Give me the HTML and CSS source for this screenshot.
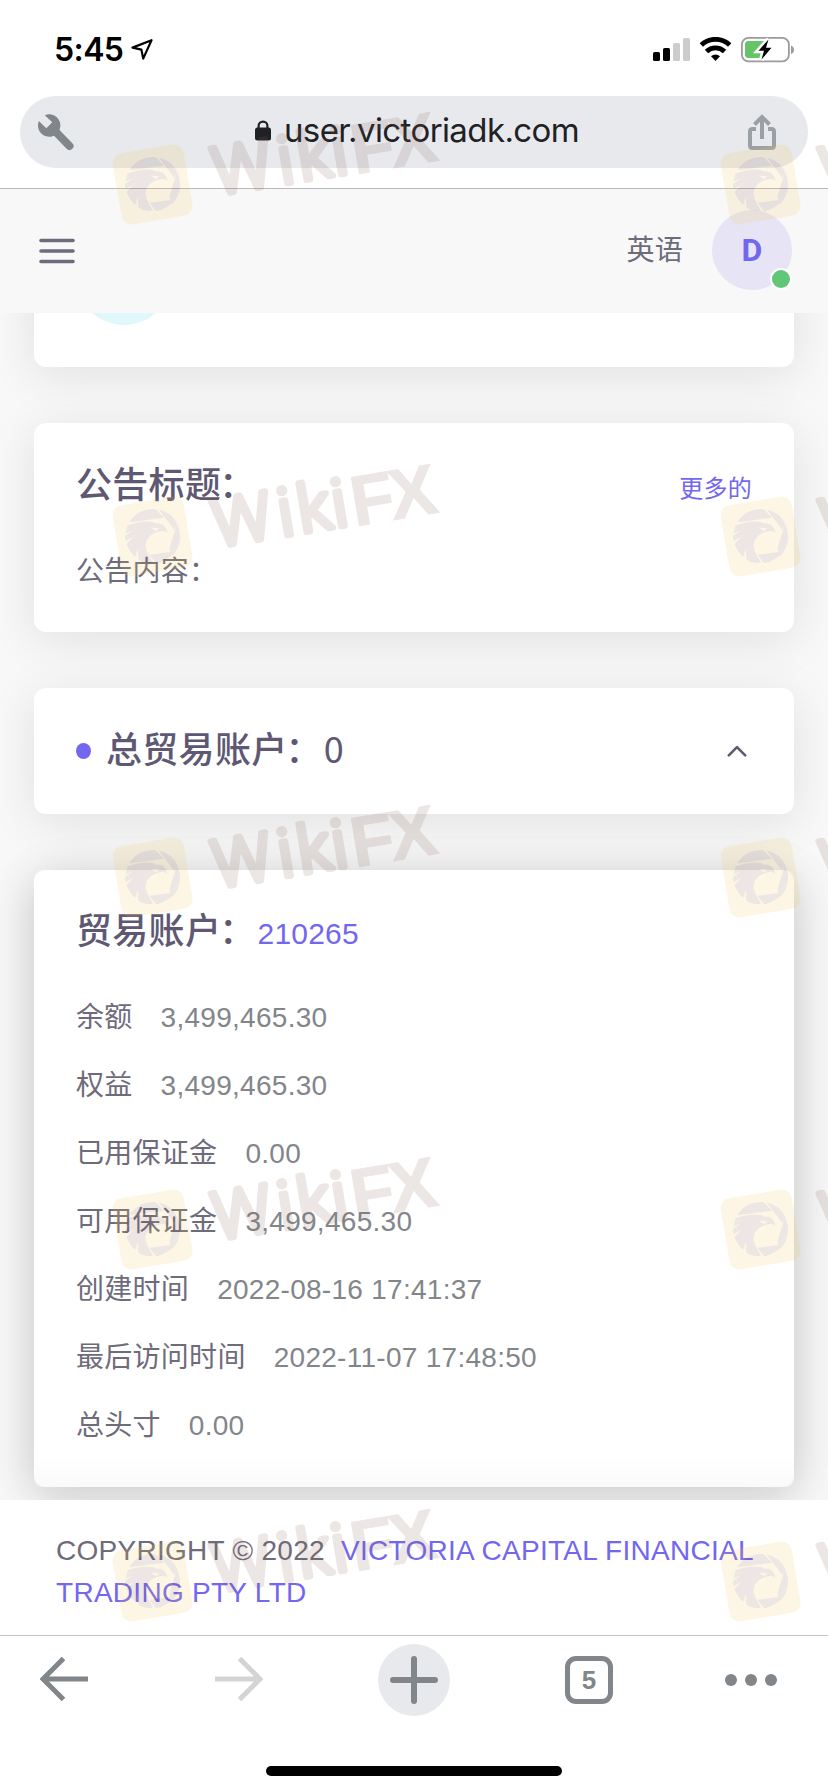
FILE: index.html
```html
<!DOCTYPE html>
<html lang="zh-CN">
<head>
<meta charset="utf-8">
<title>user.victoriadk.com</title>
<link rel="stylesheet" href="styles.css">
</head>
<body>
<div class="phone">
  <header class="status">
    <div class="status-left">
      <span class="clock">5:45</span>
      <svg class="loc" viewBox="0 0 22 21" width="22" height="21"><path d="M1.5 8.6 20.5 1.2 12.2 19.6 10.4 10.6z" fill="none" stroke="#000" stroke-width="2.2" stroke-linejoin="round"/></svg>
    </div>
    <svg class="status-right" viewBox="0 0 142 27" width="142" height="27">
      <g><rect x="0" y="15" width="7" height="9" rx="1.6"/><rect x="10" y="11" width="7" height="13" rx="1.6"/><rect x="20" y="6" width="7" height="18" rx="1.6" fill="#ccc"/><rect x="30" y="1" width="7" height="23" rx="1.6" fill="#ccc"/></g>
      <g fill="none" stroke="#000" stroke-width="4.8"><path d="M48.300 8A20.500 20.500 0 0 1 76.700 8"/><path d="M53.500 14.400A13 13 0 0 1 71.500 14.400"/></g>
      <path d="M58 19.200A6.600 6.600 0 0 1 67 19.200L62.500 24z"/>
      <rect x="88.900" y="0.900" width="47" height="23.400" rx="6.500" fill="none" stroke="#9b9b9b" stroke-width="1.800"/>
      <rect x="92" y="4" width="21" height="17" rx="3.500" fill="#65c466"/>
      <path d="M138 8.400a4.600 4.600 0 0 1 0 8.600z" fill="#9b9b9b"/>
      <path d="M115.500 2.500 105.500 13.800H111L108.500 22.500 118.500 10.800H113z" stroke="#fff" stroke-width="5"/>
      <path d="M115.500 2.500 105.500 13.800H111L108.500 22.500 118.500 10.800H113z"/>
    </svg>
  </header>
  <div class="urlbar-wrap">
    <div class="urlbar">
      <svg viewBox="0 0 36 37" width="36" height="37"><path d="M15 15 31.500 32" stroke="#80868a" stroke-width="8" stroke-linecap="round"/><path d="M6.800 1.200A11.200 11.200 0 1 1 .9 7L8.300 14.200 14.200 8.300z" fill="#80868a"/></svg>
      <div class="address">
        <svg viewBox="0 0 18 21" width="18" height="21"><path d="M4.600 9V6a4.400 4.400 0 0 1 8.800 0v3" fill="none" stroke="#202124" stroke-width="2.200"/><rect x="1" y="7.500" width="16" height="13" rx="2.500" fill="#202124"/></svg>
        <span class="host">user.victoriadk.com</span>
      </div>
      <svg viewBox="0 0 28 37" width="28" height="37" fill="none" stroke="#9aa0a6" stroke-width="4"><path d="M8 15H4.500Q2 15 2 17.500V31.500Q2 34 4.500 34H23.500Q26 34 26 31.500V17.500Q26 15 23.500 15H20M14 25V4M6.500 10.500 14 3 21.500 10.500"/></svg>
    </div>
  </div>
  <nav class="topnav">
    <svg viewBox="0 0 36 26" width="36" height="26" stroke="#6e6b7b" stroke-width="3.600" stroke-linecap="round"><path d="M2 2.500H34M2 13H34M2 23.500H34"/></svg>
    <div class="user"><span class="lang">英语</span><div class="avatar">D<i class="online"></i></div></div>
  </nav>
  <main class="page">
    <section class="card stats"><div class="stat-icon"></div></section>
    <section class="card notice">
      <div class="notice-head"><h2>公告标题<span class="colon">：</span></h2><a class="more">更多的</a></div>
      <p>公告内容：</p>
    </section>
    <section class="card total">
      <i class="dot"></i><h2>总贸易账户<span class="colon">：</span><span class="count">0</span></h2>
      <svg viewBox="0 0 20 12" width="20" height="12" fill="none" stroke="#5e5873" stroke-width="2.600" stroke-linecap="round" stroke-linejoin="round"><path d="M1.800 10.300 10 2.100 18.200 10.300"/></svg>
    </section>
    <div class="account-wrap">
      <section class="card account">
        <h2>贸易账户<span class="colon">：</span><a class="acct-no">210265</a></h2>
        <dl>
          <div><dt>余额</dt><dd>3,499,465.30</dd></div>
          <div><dt>权益</dt><dd>3,499,465.30</dd></div>
          <div><dt>已用保证金</dt><dd>0.00</dd></div>
          <div><dt>可用保证金</dt><dd>3,499,465.30</dd></div>
          <div><dt>创建时间</dt><dd>2022-08-16 17:41:37</dd></div>
          <div><dt>最后访问时间</dt><dd>2022-11-07 17:48:50</dd></div>
          <div><dt>总头寸</dt><dd>0.00</dd></div>
        </dl>
      </section>
    </div>
  </main>
  <footer class="copyright">COPYRIGHT © 2022&nbsp; <a>VICTORIA CAPITAL FINANCIAL TRADING PTY LTD</a></footer>
  <div class="toolbar">
    <svg viewBox="0 0 48 44" width="48" height="44" fill="none" stroke="#80868a" stroke-width="5"><path d="M48 22H4M23.500 1.500 3 22 23.500 42.500"/></svg>
    <svg class="forward" viewBox="0 0 48 44" width="48" height="44" fill="none" stroke="#d4d4d4" stroke-width="5"><path d="M0 22H44M24.500 1.500 45 22 24.500 42.500"/></svg>
    <div class="newtab"><svg viewBox="0 0 48 48" width="48" height="48" stroke="#80868a" stroke-width="6" stroke-linecap="round"><path d="M24 3V45M3 24H45"/></svg></div>
    <div class="tabs">5</div>
    <div class="menu"><i></i><i></i><i></i></div>
  </div>
  <div class="home"></div>

  <svg class="watermarks" viewBox="0 0 828 1792" width="828" height="1792">
    <defs>
      <g id="mark">
        <g transform="translate(152.600 184.500) rotate(-9.500)">
          <rect x="-36" y="-36" width="72" height="72" rx="10" fill="#f2c756"/>
          <g fill="#886356">
            <path d="M-20.500 -18A27.300 27.300 0 0 1 7.500 -26.500L14.500 -16.500Z"/>
            <path d="M10.500 -25.500A27.300 27.300 0 0 1 26.500 -8L22.500 -3Z"/>
            <path d="M27 -4A27.300 27.300 0 0 1 13.500 24L11 24.500 12.500 16Z" transform="rotate(-9)"/>
            <path d="M-6 17.500 19 18.500A27.300 27.300 0 0 1 -1 27Z"/>
            <path d="M-22.500 -15.500C-12 -17 1 -17 6 -12C12 -12 15.500 -7 15 -1.500C11 -5 7 -4 2 -3C-5 -1 -10 5 -8 13C-7 18 -5 22 -4 26C-11 25.500 -15 23 -18 20L-16 9L-20.500 17C-24 13 -26 8 -27 3L-19 -3L-27.500 0Q-27.500 -3 -27 -5L-19 -9L-26 -8Z"/>
          </g>
          <path d="M0 -9 8 -7 4 -5Z" fill="#f2c756"/>
        </g>
        <text class="mark-text" transform="translate(223 196.500) rotate(-9.500)"><tspan class="round" x="-6.500 60 80 114.500" y="-2.500">Wiki</tspan><tspan x="133.500 172.500" y="0">FX</tspan></text>
      </g>
    </defs>
    <g opacity=".16"><use href="#mark"/><use href="#mark" x="608"/></g>
    <g opacity=".16"><use href="#mark" y="352"/><use href="#mark" x="608" y="352"/></g>
    <g opacity=".16"><use href="#mark" y="693"/><use href="#mark" x="608" y="693"/></g>
    <g opacity=".16"><use href="#mark" y="1045"/><use href="#mark" x="608" y="1045"/></g>
    <g opacity=".16"><use href="#mark" y="1397"/><use href="#mark" x="608" y="1397"/></g>
  </svg>
</div>
</body>
</html>
```
FILE: styles.css
```css
* { box-sizing: border-box; margin: 0; padding: 0; }
body {
  width: 828px; height: 1792px; overflow: hidden; background: #fff;
  font: 28px/42px "Liberation Sans", "Noto Sans CJK SC", sans-serif;
  letter-spacing: .28px; color: #6e6b7b;
}
svg { display: block; flex: none; }
i { display: block; }
.phone { position: relative; width: 828px; height: 1792px; display: flex; flex-direction: column; overflow: hidden; }
.phone > * { flex: none; }

.status { height: 96px; padding: 0 33px 0 54px; display: flex; justify-content: space-between; }
.status-left { display: flex; }
.clock { font: 600 32px/40px Inter, sans-serif; letter-spacing: -.6px; color: #000; padding-top: 30px; width: 77px; }
.loc { margin-top: 39px; }
.status-right { margin-top: 37px; }
.urlbar-wrap { height: 93px; padding: 0 20px; border-bottom: 1px solid #b9babc; }
.urlbar { height: 72px; border-radius: 36px; background: #e8e9ed; display: flex; align-items: center; justify-content: space-between; padding: 0 32px 0 18px; }
.address { display: flex; align-items: center; gap: 12px; padding: 0 0 4px 11px; }
.host { font: 400 33px/40px Inter, sans-serif; letter-spacing: -.6px; color: #202124; }

.topnav { height: 124px; background: #f8f8f8; display: flex; align-items: center; justify-content: space-between; padding: 0 36px 0 39px; }
.user { display: flex; align-items: center; gap: 29px; padding-bottom: 2px; }
.lang { line-height: 40px; padding-top: 2px; }
.avatar { position: relative; width: 80px; height: 80px; border-radius: 50%; background: #e7e5f5; color: #7367f0; font: 700 32px/81px Roboto, sans-serif; text-align: center; }
.online { position: absolute; right: 2px; bottom: 2px; width: 18px; height: 18px; border-radius: 50%; background: #60c678; box-shadow: 0 0 0 2px #fff; }

.page { height: 1187px; background: #f8f8f8; padding: 0 34px; overflow: hidden; display: flex; flex-direction: column; }
.card { flex: none; background: #fff; border-radius: 12px; box-shadow: 0 8px 48px rgba(20, 20, 24, .1); }
.stats { height: 154px; margin: -100px 0 56px; padding: 16px 42px; }
.stat-icon { width: 96px; height: 96px; border-radius: 50%; background: #e0f7fb; }
h2 { font-weight: 500; font-size: 36px; line-height: 44px; color: #5e5873; letter-spacing: .3px; }
.colon { margin-left: -2px; margin-right: 2px; }
.notice { height: 209px; margin-bottom: 56px; padding: 41px 42px; }
.notice-head { display: flex; align-items: center; justify-content: space-between; height: 44px; }
.more { font-size: 24px; line-height: 36px; color: #7367f0; padding-top: 6px; }
.notice p { margin-top: 43px; }
.total { height: 126px; margin-bottom: 56px; padding: 0 47px 0 42px; display: flex; align-items: center; }
.dot { width: 15px; height: 16px; border-radius: 50%; background: #7367f0; margin-right: 15px; }
.total h2 { flex: 1; padding-bottom: 4px; }
.count { font-family: "Noto Sans CJK SC", sans-serif; font-weight: 400; }
.account-wrap { flex: none; height: 617px; border-radius: 8px; box-shadow: 0 8px 48px rgba(20, 20, 24, .12); }
.account { height: 617px; padding: 40px 42px; background: linear-gradient(#fff 95%, #fafafa); }
.acct-no { font-size: 30px; font-weight: 400; color: #7367f0; letter-spacing: .2px; }
dl { margin-top: 41px; display: grid; gap: 26px; }
dl div { display: flex; gap: 28px; height: 42px; }
dd { color: #82868b; }

.copyright { height: 134px; padding: 30px 56px 0; }
.copyright a { color: #7367f0; }
.toolbar { height: 90px; border-top: 1px solid #c4c5c6; margin-top: 1px; padding: 8px 51px 0 40px; display: flex; align-items: flex-start; }
.toolbar > svg { margin-top: 13px; }
.toolbar .forward { margin-left: 127px; }
.newtab { width: 72px; height: 72px; margin-left: 115px; border-radius: 50%; background: #e8e9ed; padding: 12px; }
.tabs { width: 48px; height: 48px; margin: 12px 0 0 115px; border: 5px solid #80868a; border-radius: 11px; font: 700 26px/38px "Liberation Sans", sans-serif; text-align: center; color: #80868a; }
.menu { display: flex; gap: 8px; margin: 30px 0 0 auto; }
.menu i { width: 12px; height: 12px; border-radius: 50%; background: #80868a; }
.home { width: 296px; height: 10px; margin: 41px auto 0; border-radius: 5px; background: #000; }

.watermarks { position: absolute; left: 0; top: 0; pointer-events: none; }
.mark-text { font: 700 71px "Liberation Sans", sans-serif; letter-spacing: 0; fill: #886356; stroke: #886356; stroke-width: 1px; stroke-linejoin: round; }
.round { font: 300 66px Roboto, sans-serif; stroke-width: 6px; }
```
